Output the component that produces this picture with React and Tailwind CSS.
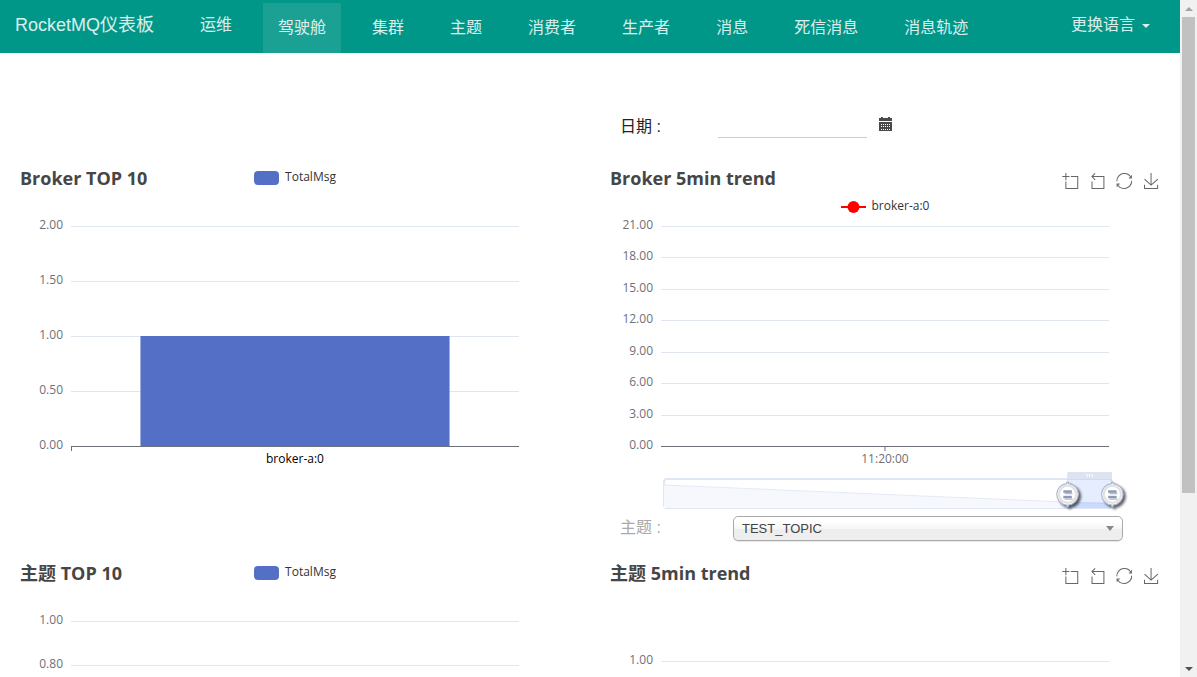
import React, { useState } from "react";

const NAV_ITEMS = ["驾驶舱", "集群", "主题", "消费者", "生产者", "消息", "死信消息", "消息轨迹"];

const TOOLS = [
  {
    name: "区域缩放",
    path: "M0,13.5h26.9 M13.5,26.9V0 M32.1,13.5H58V58H13.5 V32.1",
  },
  {
    name: "区域缩放还原",
    path: "M22,1.4L9.9,13.5l12.3,12.3 M10.3,13.5H54.9v44.6 H10.3v-26",
  },
  {
    name: "还原",
    path: "M47,18.9h9.8V8.7 M56.3,20.1 C52.1,9,40.5,0.6,26.8,2.1C12.6,3.7,1.6,16.2,2.1,30.6 M13,41.1H3.1v10.2 M3.7,39.9c4.2,11.1,15.8,19.5,29.5,18 c14.2-1.6,25.2-14.1,24.7-28.5",
  },
  {
    name: "保存为图片",
    path: "M4.7,22.9L29.3,45.5L54.7,23.4M4.6,43.6L4.6,58L53.8,58L53.8,43.6M29.2,45.1L29.2,0",
  },
];

// Top of the plot area and its height, in px
const PLOT_TOP = 10;
const PLOT_HEIGHT = 220;

const Navbar = () => {
  const [active, setActive] = useState("驾驶舱");

  return (
    <nav className="flex h-[53px] items-start bg-[#009688] font-['Liberation_Sans','Noto_Sans_CJK_SC',sans-serif] text-base leading-[50px] whitespace-nowrap text-white/85">
      <a href="#/" className="px-[15px] text-lg leading-[50px]">
        RocketMQ仪表板
      </a>
      <div className="ml-4 flex gap-4">
        <a href="#/ops" className="px-[15px]">
          运维
        </a>
        {NAV_ITEMS.map((item) => (
          <a
            key={item}
            href="#/"
            onClick={() => setActive(item)}
            className={`mt-[3px] px-[15px] ${active === item ? "bg-white/10" : ""}`}
          >
            {item}
          </a>
        ))}
      </div>
      <button type="button" className="mr-[15px] ml-auto flex items-center gap-[7px] px-[15px]">
        更换语言
        <span className="mt-0.5 border-x-4 border-t-4 border-x-transparent border-t-current" />
      </button>
    </nav>
  );
};

const Toolbox = () => (
  <div className="flex gap-[11px] justify-self-end pt-[7px] pr-[6px]">
    {TOOLS.map((tool) => (
      <button key={tool.name} type="button" title={tool.name} className="size-4">
        <svg viewBox="-1 0 60 60" className="size-4 overflow-visible" fill="none" stroke="#666" strokeWidth="3.8">
          <path d={tool.path} />
        </svg>
      </button>
    ))}
  </div>
);

const BarLegend = () => (
  <div className="flex items-center gap-1.5 text-xs text-[#333]">
    <span className="mt-0.5 h-[14px] w-[25px] rounded bg-[#5470c6]" />
    TotalMsg
  </div>
);

const LineLegend = () => (
  <div className="flex items-center justify-center gap-1.5 pt-0.5 text-xs text-[#333]">
    <svg width="25" height="12" className="mt-0.5">
      <path d="M0 6H25" stroke="#f00" strokeWidth="2" />
      <circle cx="12.5" cy="6" r="6" fill="#f00" />
    </svg>
    broker-a:0
  </div>
);

const Plot = ({ max, ticks, bar, tickAt, label }) => {
  const bottom = PLOT_TOP + PLOT_HEIGHT;
  const toY = (value) => Math.round(bottom - (value / max) * PLOT_HEIGHT) + 0.5;

  return (
    <svg className="block h-[256px] w-full overflow-visible text-xs">
      <svg x="10%" width="80%" className="overflow-visible">
        {ticks.map((value) => (
          <g key={value}>
            <text x="-8" y={toY(value) + 2} textAnchor="end" fill="#6e7079">
              {value.toFixed(2)}
            </text>
            {value > 0 && <line x1="0" x2="100%" y1={toY(value)} y2={toY(value)} stroke="#e0e6f1" />}
          </g>
        ))}
        {bar && (
          <rect x="15.5%" width="69%" y={toY(bar) - 0.5} height={bottom - toY(bar) + 1} fill="#5470c6" />
        )}
        <line x1="0" x2="100%" y1={bottom + 0.5} y2={bottom + 0.5} stroke="#6e7079" />
        {tickAt && <line x1={tickAt} x2={tickAt} y1={bottom} y2={bottom + 5} stroke="#6e7079" />}
        {label && (
          <text x="50%" y={bottom + 17} textAnchor="middle" fill={bar ? "#000" : "#6e7079"}>
            {label}
          </text>
        )}
      </svg>
    </svg>
  );
};

const Handle = ({ at }) => (
  <svg x={`${at}%`} className="overflow-visible">
    <g transform="translate(-11 -2) scale(1.14)">
      <path
        d="M10.7,11.9v-1.3H9.3v1.3c-4.9,0.3-8.8,4.4-8.8,9.4c0,5,3.9,9.1,8.8,9.4v1.3h1.3v-1.3c4.9-0.3,8.8-4.4,8.8-9.4C19.5,16.3,15.6,12.2,10.7,11.9z M13.3,24.4H6.7V23h6.6V24.4z M13.3,19.6H6.7v-1.4h6.6V19.6z"
        fill="#fff"
        stroke="#acb8d1"
        className="drop-shadow-[2px_2px_1px_rgba(0,0,0,0.6)]"
      />
      <circle cx="10" cy="21.3" r="7.6" fill="none" stroke="#e2e2e2" strokeWidth="2" />
      <path d="M6.7 18.9H13.3M6.7 23.7H13.3" stroke="#8c9ab8" strokeWidth="1.6" />
      <path d="M7.5 20.7H14.3M7.5 25.5H14.3" stroke="#bbb" strokeWidth="1.2" />
    </g>
  </svg>
);

const DataZoom = () => {
  const [start, setStart] = useState(90);

  return (
    <div className="relative mr-[53px] ml-[59px] h-9">
      <svg className="block h-9 w-full overflow-visible">
        <rect x="0" y="7" width="100%" height="29" rx="3" fill="#fff" stroke="#dfe6f5" strokeWidth="2" />
        <svg y="8" width="100%" height="28" viewBox="0 0 100 28" preserveAspectRatio="none">
          <path d="M0 5L100 24V28H0Z" fill="#f6f8fd" />
          <path d="M0 5L100 24" stroke="#e4eaf5" vectorEffect="non-scaling-stroke" />
        </svg>
        <rect x={`${start}%`} y="7" width={`${100 - start}%`} height="29" fill="#87afff" fillOpacity="0.22" />
        <rect x={`${start}%`} y="30" width={`${100 - start}%`} height="6" fill="#87afff" fillOpacity="0.2" />
        <rect x={`${start}%`} y="0" width={`${100 - start}%`} height="7" rx="1" fill="#dce4f1" />
        <svg x={`${(100 + start) / 2}%`} className="overflow-visible">
          <path d="M-2.5 2V5M0 2V5M2.5 2V5" stroke="#fff" />
        </svg>
        <Handle at={start} />
        <Handle at={100} />
      </svg>
      <input
        type="range"
        aria-label="时间范围"
        value={start}
        onChange={(e) => setStart(Math.min(Number(e.target.value), 99))}
        className="absolute inset-0 h-full w-full cursor-pointer opacity-0"
      />
    </div>
  );
};

const ChartPanel = ({ title, legend, subLegend, tools, children }) => (
  <section className="px-[15px] font-['Open_Sans','Noto_Sans_CJK_SC',sans-serif]">
    <div className="grid h-[30px] grid-cols-[1fr_auto_1fr] items-start">
      <h2 className="pl-[5px] text-lg leading-6 font-bold whitespace-nowrap text-[#464646]">{title}</h2>
      <div className="pt-[3px]">{legend}</div>
      {tools && <Toolbox />}
    </div>
    <div className="h-5">{subLegend}</div>
    {children}
  </section>
);

const CalendarIcon = () => (
  <svg width="13" height="14" viewBox="0 0 13 14" fill="#4a4a4a">
    <path d="M0 1H2V0H4V1H9V0H11V1H13V4H0Z" />
    <path
      fillRule="evenodd"
      d="M0 5H13V14H0Z M2 7V8H3V7Z M4 7V8H5V7Z M6 7V8H7V7Z M8 7V8H9V7Z M10 7V8H11V7Z M2 9V10H3V9Z M4 9V10H5V9Z M6 9V10H7V9Z M8 9V10H9V9Z M10 9V10H11V9Z M2 12V13H3V12Z M4 12V13H5V12Z M6 12V13H7V12Z M8 12V13H9V12Z M10 12V13H11V12Z"
    />
  </svg>
);

const Scrollbar = () => (
  <div aria-hidden="true" className="flex w-[17px] shrink-0 flex-col items-center bg-[#f1f1f1]">
    <div className="flex h-[17px] items-center">
      <span className="border-x-4 border-b-4 border-x-transparent border-b-[#a3a3a3]" />
    </div>
    <div className="w-[13px] flex-1">
      <div className="h-[74%] bg-[#c1c1c1]" />
    </div>
    <div className="flex h-[17px] items-center">
      <span className="border-x-4 border-t-4 border-x-transparent border-t-[#505050]" />
    </div>
  </div>
);

const DashboardPage = () => {
  const [date, setDate] = useState("");
  const [topic, setTopic] = useState("TEST_TOPIC");

  return (
    <div className="flex h-screen overflow-hidden bg-white">
      <div className="min-w-0 flex-1 overflow-x-hidden overflow-y-auto [scrollbar-width:none]">
        <Navbar />
        <main className="grid grid-cols-2 font-['Liberation_Sans','Noto_Sans_CJK_SC',sans-serif]">
          {/* Date filter */}
          <div className="col-start-2 flex h-[113px] items-start pt-[60px] pl-[30px]">
            <label htmlFor="date" className="w-[98px] pt-[2px] text-base text-[#222]">
              日期 :
            </label>
            <input
              id="date"
              type="text"
              value={date}
              onChange={(e) => setDate(e.target.value)}
              className="h-[25px] w-[149px] border-b border-[#ccc] text-sm outline-none"
            />
            <button type="button" aria-label="选择日期" className="mt-1 ml-3">
              <CalendarIcon />
            </button>
          </div>

          <ChartPanel title="Broker TOP 10" legend={<BarLegend />}>
            <Plot max={2} ticks={[2, 1.5, 1, 0.5, 0]} bar={1} tickAt="0.5" label="broker-a:0" />
          </ChartPanel>
          <ChartPanel title="Broker 5min trend" subLegend={<LineLegend />} tools>
            <Plot max={21} ticks={[21, 18, 15, 12, 9, 6, 3, 0]} tickAt="50%" label="11:20:00" />
            <DataZoom />
          </ChartPanel>

          {/* Topic filter */}
          <div className="col-start-2 flex h-[53px] items-start pt-2 pr-[57px] pl-[30px]">
            <label htmlFor="topic" className="w-[113px] shrink-0 text-base leading-6 text-[#aaa]">
              主题 :
            </label>
            <div className="relative flex-1">
              <select
                id="topic"
                value={topic}
                onChange={(e) => setTopic(e.target.value)}
                className="block h-[25px] w-full appearance-none rounded-[5px] border border-[#aaa] bg-linear-to-b from-white from-20% via-[#f6f6f6] via-50% to-[#eee] to-52% px-2 text-[13px] text-[#444] shadow-[0_1px_1px_rgba(0,0,0,0.1)]"
              >
                <option>TEST_TOPIC</option>
              </select>
              <span className="pointer-events-none absolute top-[10px] right-[9px] border-x-4 border-t-[5px] border-x-transparent border-t-[#888]" />
            </div>
          </div>

          <ChartPanel title="主题 TOP 10" legend={<BarLegend />}>
            <Plot max={1} ticks={[1, 0.8, 0.6, 0.4, 0.2, 0]} tickAt="0.5" />
          </ChartPanel>
          <ChartPanel title="主题 5min trend" tools>
            <Plot max={1.22} ticks={[1, 0.8, 0.6, 0.4, 0.2, 0]} />
          </ChartPanel>
        </main>
      </div>
      <Scrollbar />
    </div>
  );
};

export default DashboardPage;
